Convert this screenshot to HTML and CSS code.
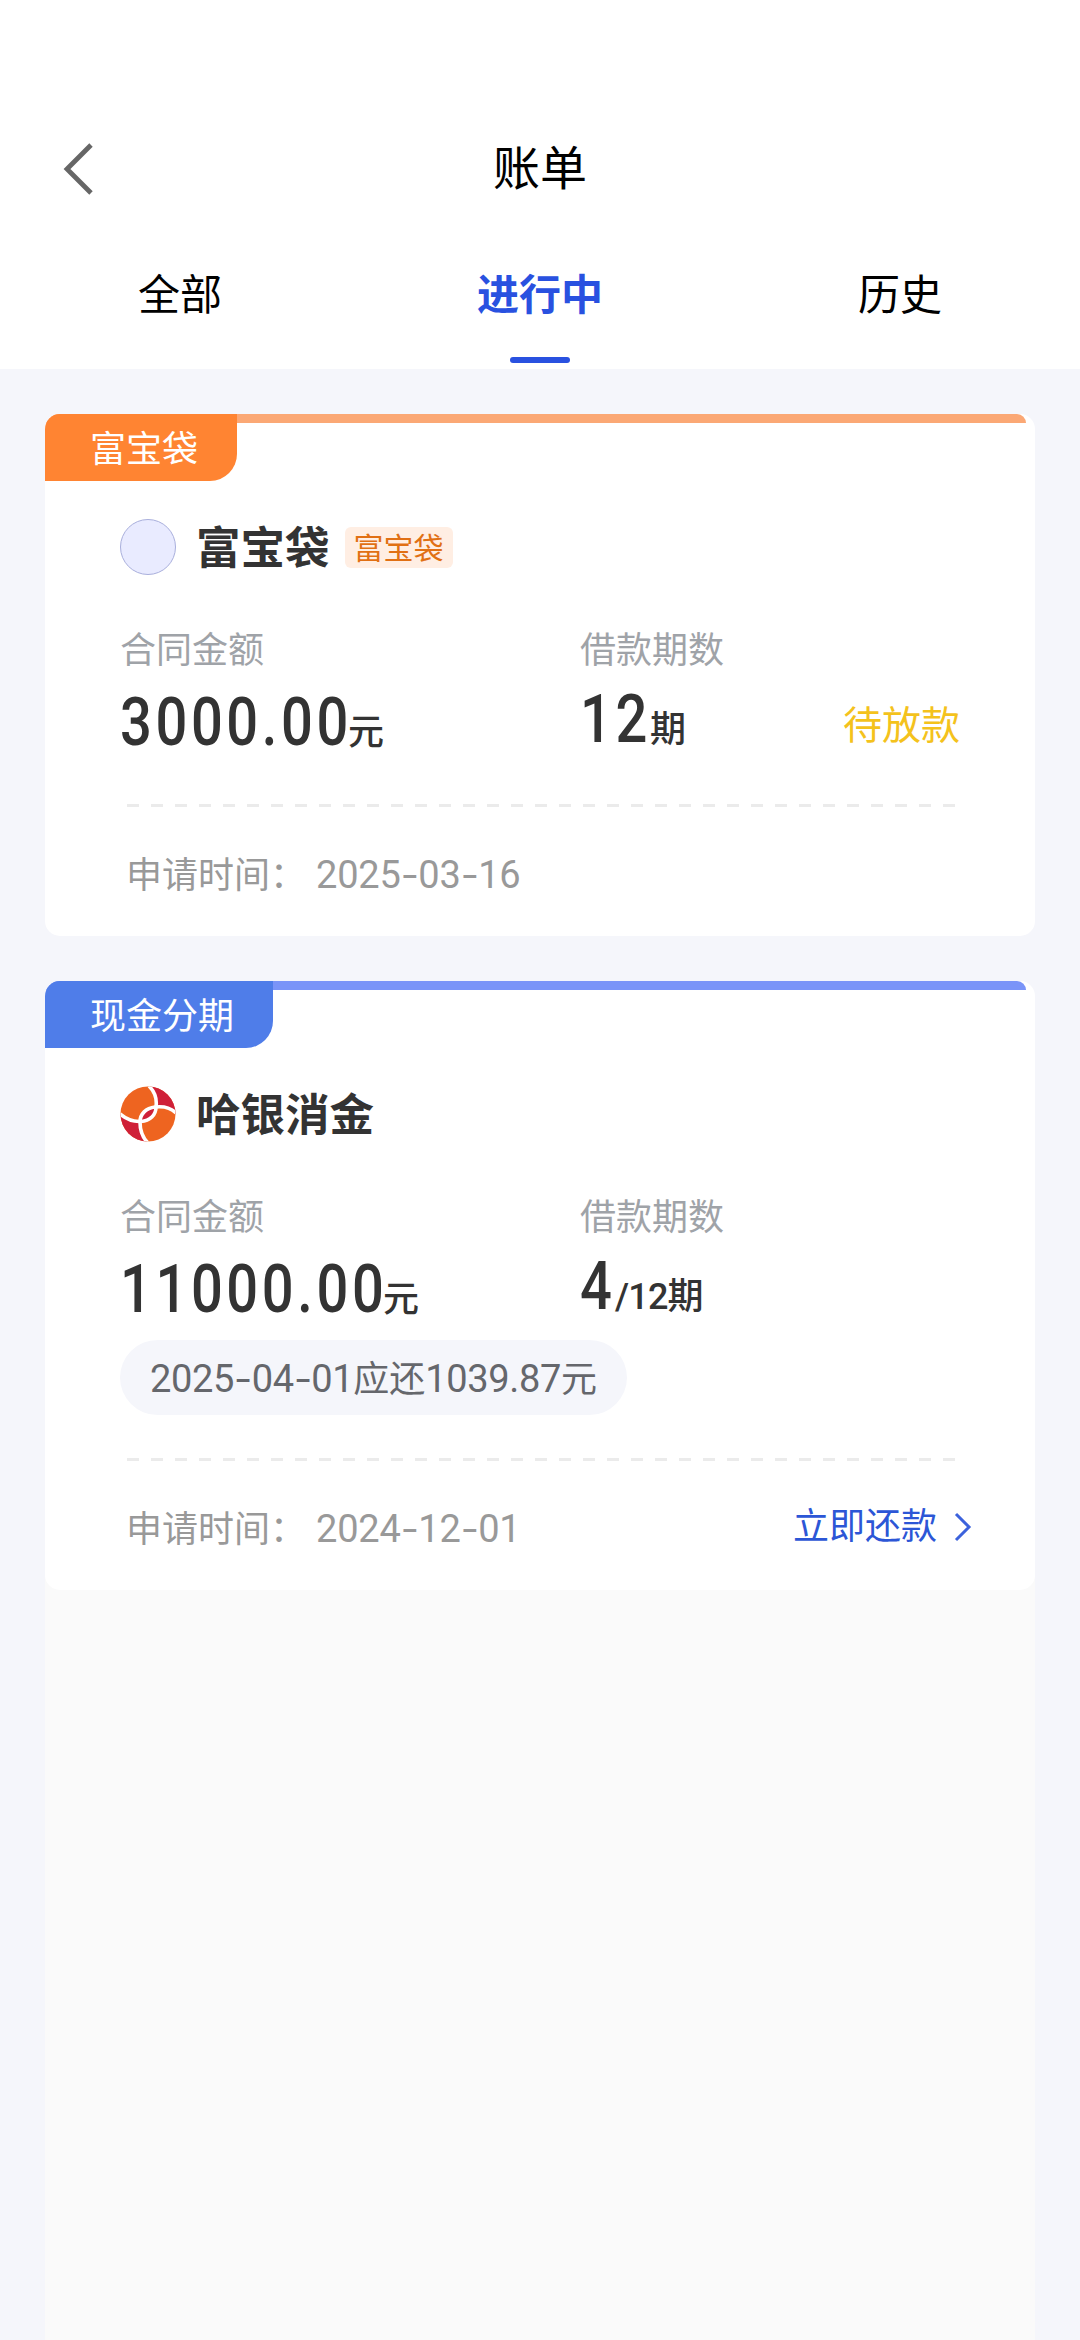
FILE: index.html
```html
<!DOCTYPE html>
<html lang="zh-CN">
<head>
<meta charset="utf-8">
<title>账单</title>
<link rel="stylesheet" href="styles.css">
</head>
<body>
<div class="page">
  <header class="header">
    <div class="navbar">
      <svg class="back" viewBox="0 0 32 54"><path d="M29 3 5 27l24 24"/></svg>
      <h1 class="title">账单</h1>
    </div>
    <nav class="tabs">
      <a class="tab">全部</a>
      <a class="tab active">进行中</a>
      <a class="tab">历史</a>
    </nav>
  </header>

  <main class="list">
    <div class="slot slot-filled">
      <article class="card orange">
        <div class="strip"><span class="tag">富宝袋</span></div>
        <div class="body">
          <div class="lender">
            <span class="avatar"></span>
            <h2 class="name">富宝袋</h2>
            <span class="badge">富宝袋</span>
          </div>
          <div class="facts">
            <div class="fact">
              <div class="label">合同金额</div>
              <div class="value"><b class="amount" style="--width: 228px">3000.00</b>元</div>
            </div>
            <div class="fact">
              <div class="label">借款期数</div>
              <div class="value terms"><b class="amount" style="--width: 70px">12</b>期</div>
            </div>
            <div class="status">待放款</div>
          </div>
          <div class="divider"></div>
          <div class="foot">
            <div>申请时间：<span class="num date">2025<i>-</i>03<i>-</i>16</span></div>
          </div>
        </div>
      </article>
    </div>

    <div class="slot">
      <article class="card blue">
        <div class="strip"><span class="tag">现金分期</span></div>
        <div class="body">
          <div class="lender">
            <svg class="logo" viewBox="0 0 56 56">
              <defs><clipPath id="disc"><circle cx="28" cy="28" r="27.5"/></clipPath></defs>
              <g clip-path="url(#disc)">
                <rect width="56" height="56" fill="#ee6420"/>
                <path fill="#cf2038" d="M30 0C36 7 37 14 36 21C44 20 51 23 56 28V0Z"/>
                <path fill="#cf2038" d="M0 28C7 34 13 36 20 35C19 43 22 50 27 56H0Z"/>
                <path fill="#cf2038" d="M20 35C20 26 27 21 36 21C36 29 29 35 20 35Z"/>
                <g fill="none" stroke="#fff" stroke-width="3.6">
                  <path d="M29 0C35 6 37 14 36 21C36 29 30 35 21 35.500C13 36 6 33 0 28"/>
                  <path d="M56 27C51 22 43 20 35 21C26 22 20 28 20 36C20 44 22 51 28 57"/>
                </g>
              </g>
            </svg>
            <h2 class="name">哈银消金</h2>
          </div>
          <div class="facts">
            <div class="fact">
              <div class="label">合同金额</div>
              <div class="value"><b class="amount" style="--width: 263px">11000.00</b>元</div>
            </div>
            <div class="fact">
              <div class="label">借款期数</div>
              <div class="value terms"><b class="amount" style="--width: 35px">4</b><span class="total">/12</span>期</div>
            </div>
          </div>
          <div class="due"><span class="num">2025<i>-</i>04<i>-</i>01</span>应还<span class="num">1039.87</span>元</div>
          <div class="divider"></div>
          <div class="foot">
            <div>申请时间：<span class="num date">2024<i>-</i>12<i>-</i>01</span></div>
            <a class="repay">立即还款<svg class="arrow" viewBox="0 0 18 30"><path d="M2 2 15 15 2 28"/></svg></a>
          </div>
        </div>
      </article>
    </div>
  </main>
</div>
</body>
</html>
```
FILE: styles.css
```css
* { box-sizing: border-box; }
body { margin: 0; }
h1, h2 { margin: 0; font-weight: 400; }

.page {
  display: flex;
  flex-direction: column;
  width: 1080px;
  min-height: 2340px;
  background: #f5f6fb;
  font-family: Roboto, "Noto Sans CJK SC", sans-serif;
  color: #333;
}

/* header */
.header { height: 369px; padding-top: 120px; background: #fff; }
.navbar {
  display: grid;
  grid-template-columns: 1fr auto 1fr;
  align-items: center;
  height: 96px;
  padding: 0 62px;
}
.back { width: 32px; height: 54px; fill: none; stroke: #666; stroke-width: 4.800; }
.title { font-size: 47px; line-height: 98px; color: #000; }
.tabs { display: grid; grid-template-columns: repeat(3, 1fr); height: 153px; }
.tab {
  display: flex;
  flex-direction: column;
  align-items: center;
  justify-content: space-between;
  padding: 47px 0 6px;
  font-size: 42px;
  line-height: 66px;
  color: #000;
}
.active { font-weight: 700; color: #2951e0; }
.active::after { content: ""; width: 60px; height: 6px; border-radius: 3px; background: #2951e0; }

/* list */
.list { flex: 1; margin: 0 45px; background: #fafafa; }
.slot-filled { padding: 45px 0; background: #f5f6fb; }
.card { border-radius: 15px; background: #fff; }
.slot:last-child { background: linear-gradient(#f5f6fb 30px, transparent 30px); }

.strip {
  height: 67px;
  margin-right: 9px;
  border-radius: 15px 9px 0 0;
  background: linear-gradient(var(--line), var(--line)) no-repeat 0 0 / 100% 9px;
}
.tag {
  display: inline-block;
  height: 67px;
  padding: 0 39px 0 45px;
  border-radius: 15px 0 27px 0;
  background: var(--tag);
  font-size: 36px;
  line-height: 72px;
  color: #fff;
}
.orange { --line: #fba875; --tag: #ff8432; }
.blue { --line: #7a94f8; --tag: #4f7de9; }

.body { padding: 38px 75px 33px; }
.lender { display: flex; align-items: center; height: 56px; }
.avatar { width: 56px; height: 56px; border: 1px solid #a9afdc; border-radius: 50%; background: #e9ebff; }
.logo { width: 56px; height: 56px; }
.name { margin-left: 20px; padding-top: 4px; font-size: 44.500px; font-weight: 700; line-height: 62px; }
.badge {
  height: 41px;
  margin-left: 15px;
  padding: 0 9px;
  border-radius: 6px;
  background: #ffeee3;
  font-size: 30px;
  line-height: 43px;
  color: #e17014;
}

.facts { display: grid; grid-template-columns: 460px 1fr auto; margin-top: 49px; }
.label { height: 51px; font-size: 36px; line-height: 54px; color: #9fa3a8; }
.value {
  height: 72px;
  margin-top: 11px;
  font-size: 36px;
  font-weight: 500;
  line-height: 74px;
  white-space: nowrap;
}
.terms { margin-top: 8px; }
.amount {
  display: inline-block;
  width: var(--width);
  font-size: 66px;
  font-weight: 500;
  letter-spacing: 4.200px;
  transform: scaleX(0.85);
  transform-origin: 0 50%;
}
.total { letter-spacing: -0.800px; }
.status { align-self: end; margin-right: 0; font-size: 39px; line-height: 64px; color: #f4c21c; }

.num { font-size: 38px; letter-spacing: -0.200px; }
.num i { display: inline-block; width: 17.600px; font-style: normal; text-align: center; transform: scaleX(1.400); }
.date { margin-left: 10px; }

.due {
  width: fit-content;
  height: 75px;
  margin-top: 15px;
  padding: 0 30px;
  border-radius: 38px;
  background: #f5f6fb;
  font-size: 36px;
  line-height: 79px;
  color: #65676c;
}
.due .num { letter-spacing: -0.350px; }
.divider {
  height: 3px;
  margin: 46px 4px 0 7px;
  background: repeating-linear-gradient(90deg, #ebebeb 0 12px, transparent 12px 24px);
}
.due + .divider { margin-top: 43px; }
.foot {
  display: flex;
  justify-content: space-between;
  height: 60px;
  margin: 36px -12px 0 6px;
  font-size: 36px;
  line-height: 64px;
  color: #999;
}
.repay { display: flex; align-items: center; gap: 17px; color: #2c56d6; }
.arrow { width: 18px; height: 30px; fill: none; stroke: #3c62dc; stroke-width: 3; }
```
